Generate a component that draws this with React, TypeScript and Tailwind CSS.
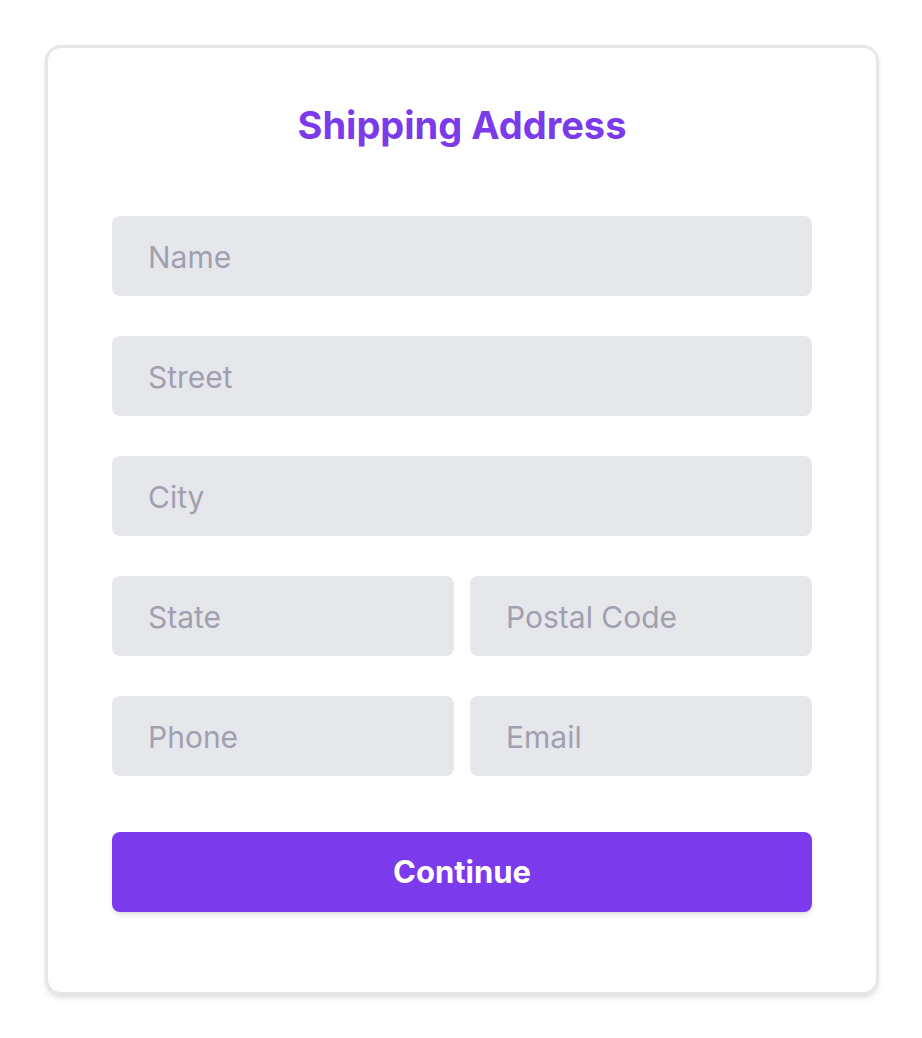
import { FC } from "react";

const Field: FC<{ placeholder: string; type?: string }> = ({ placeholder, type = "text" }) => (
  <input
    type={type}
    placeholder={placeholder}
    className="w-full h-[80px] rounded-lg bg-[#e5e7eb] px-[36px] pt-[2px] text-[30px] text-[#374151] placeholder:text-[#a19fb0] outline-none"
  />
);

const App: FC = () => {
  return (
    <div
      className="min-h-screen bg-white pt-[45px] pl-[45px]"
      style={{ fontFamily: "Inter, 'Noto Sans', sans-serif" }}
    >
      <div className="w-[834px] rounded-2xl border-[3px] border-[#e5e7eb] bg-white shadow-md px-[64px] pt-[53px] pb-[80px]">
        <h1 className="text-center text-[38px] leading-[48px] font-bold text-[#7c3aed] mb-[67px]">
          Shipping Address
        </h1>
        <form className="flex flex-col gap-[40px]" onSubmit={(e) => e.preventDefault()}>
          <Field placeholder="Name" />
          <Field placeholder="Street" />
          <Field placeholder="City" />
          <div className="grid grid-cols-2 gap-[16px]">
            <Field placeholder="State" />
            <Field placeholder="Postal Code" />
          </div>
          <div className="grid grid-cols-2 gap-[16px]">
            <Field placeholder="Phone" type="tel" />
            <Field placeholder="Email" type="email" />
          </div>
          <button
            type="submit"
            className="mt-[16px] h-[80px] w-full rounded-lg bg-[#7c3aed] text-white text-[31px] font-bold shadow-md"
          >
            Continue
          </button>
        </form>
      </div>
    </div>
  );
};

export default App;
